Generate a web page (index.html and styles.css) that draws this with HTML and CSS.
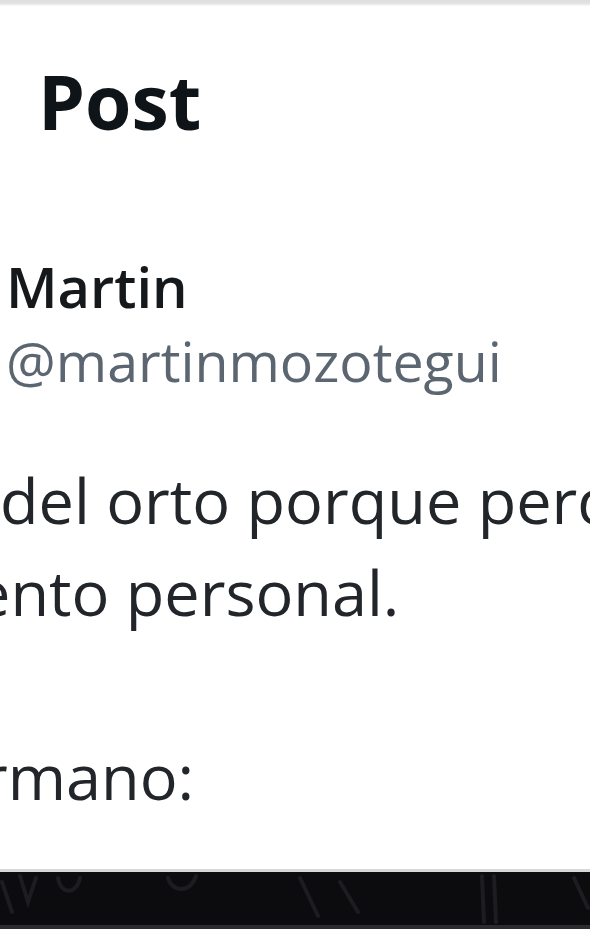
FILE: index.html
```html
<!DOCTYPE html>
<html lang="es">
<head>
<meta charset="utf-8">
<title>Post</title>
<link rel="stylesheet" href="styles.css">
</head>
<body>
<div class="page">
  <div class="topbar"></div>
  <header class="header">
    <h1 class="title">Post</h1>
  </header>
  <section class="author">
    <div class="name">Martin</div>
    <div class="handle">@martinmozotegui</div>
  </section>
  <div class="tweet-text">
    <p class="line">del orto porque perdí el</p>
    <p class="line line-cut-e">ento personal.</p>
    <p class="line line-empty">&nbsp;</p>
    <p class="line line-cut-r">rmano:</p>
  </div>
  <div class="media">
    <svg class="media-art" width="590" height="53" viewBox="0 0 590 53" xmlns="http://www.w3.org/2000/svg">
      <g fill="none" stroke="#1d1d21" stroke-width="4" stroke-linecap="round">
        <path d="M2 10 L12 40"/>
        <path d="M20 4 L28 30 L36 6"/>
        <path d="M58 6 C60 22 76 24 80 6"/>
        <path d="M168 6 C172 20 190 22 196 4"/>
        <path d="M300 6 L318 44"/>
        <path d="M340 10 L358 40"/>
        <path d="M482 4 L484 50"/>
        <path d="M494 4 L496 50"/>
        <path d="M574 6 L588 36"/>
      </g>
    </svg>
  </div>
</div>
</body>
</html>
```

FILE: styles.css
```css
html, body {
  margin: 0;
  padding: 0;
  background: #ffffff;
}

.page {
  width: 590px;
  height: 930px;
  overflow: hidden;
  display: flex;
  flex-direction: column;
  font-family: "Open Sans", "Noto Sans", "Liberation Sans", sans-serif;
  color: #0f1419;
}

.topbar {
  height: 5px;
  flex: none;
  background: linear-gradient(#dedede 0, #e3e3e3 70%, #f4f4f4 100%);
  border-bottom: 1px solid #f7f7f7;
}

.header {
  flex: none;
  margin-top: 45px;
  padding-left: 38px;
}

.title {
  margin: 0;
  font-size: 75px;
  line-height: 100px;
  font-weight: 700;
  color: #0f1419;
}

.author {
  flex: none;
  margin-top: 105px;
  padding-left: 6px;
  display: flex;
  flex-direction: column;
  gap: 10px;
}

.name {
  font-size: 56px;
  line-height: 60px;
  font-weight: 600;
  color: #16191c;
}

.handle {
  font-size: 55.5px;
  line-height: 70px;
  font-weight: 400;
  color: #5b6670;
}

.tweet-text {
  flex: none;
  margin-top: 58px;
  padding-left: 0;
  font-size: 63px;
  line-height: 92px;
  color: #22262a;
}

.line {
  margin: 0;
  white-space: nowrap;
}

.line-cut-e {
  margin-left: -25px;
}

.line-cut-r {
  margin-left: -18px;
}

.media {
  flex: none;
  margin-top: 47px;
  height: 53px;
  background: #0c0c0f;
  border-top: 3px solid #d8d8d8;
  border-bottom: 4px solid #2b2b30;
}

.media-art {
  display: block;
}
```
